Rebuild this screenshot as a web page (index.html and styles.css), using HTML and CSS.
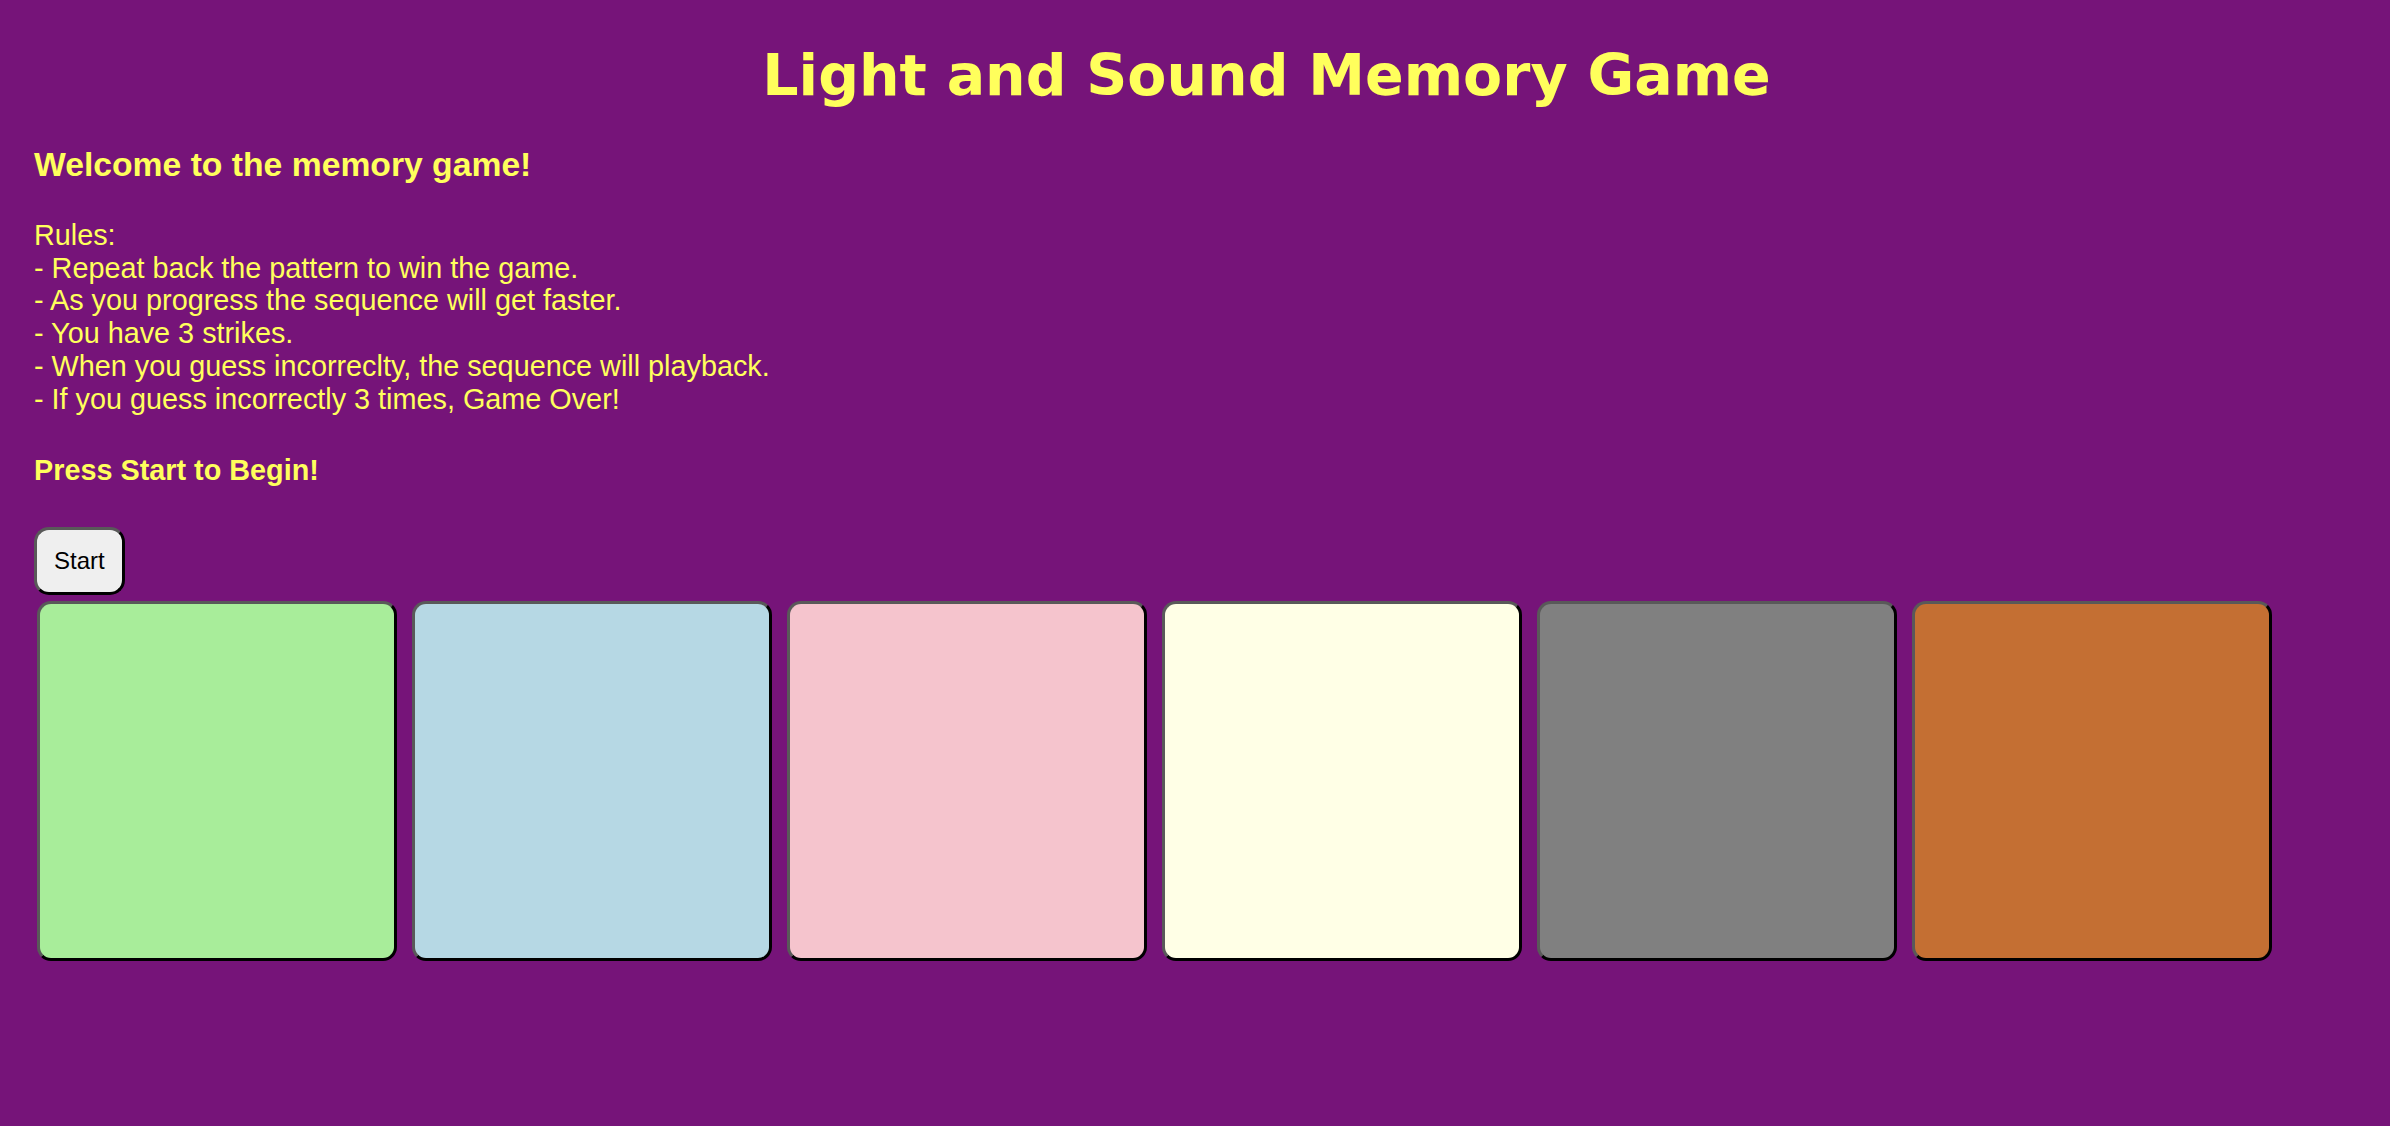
FILE: index.html
```html
<!DOCTYPE html>
<html lang="en">
<head>
<meta charset="utf-8">
<title>Light and Sound Memory Game</title>
<link rel="stylesheet" href="styles.css">
</head>
<body>
  <h1 class="title">Light and Sound Memory Game</h1>
  <h3 class="welcome">Welcome to the memory game!</h3>
  <p class="rules">Rules:<br>- Repeat back the pattern to win the game.<br>- As you progress the sequence will get faster.<br>- You have 3 strikes.<br>- When you guess incorreclty, the sequence will playback.<br>- If you guess incorrectly 3 times, Game Over!</p>
  <h4 class="prompt">Press Start to Begin!</h4>
  <div class="controls">
    <button class="start-btn">Start</button>
  </div>
  <div class="game-area">
    <button class="pad pad-green"></button>
    <button class="pad pad-blue"></button>
    <button class="pad pad-pink"></button>
    <button class="pad pad-yellow"></button>
    <button class="pad pad-gray"></button>
    <button class="pad pad-orange"></button>
  </div>
</body>
</html>
```
FILE: styles.css
```css
html, body {
  background: #761479;
}
body {
  margin: 0;
  padding: 0 0 0 34px;
  color: #ffff5c;
  font-family: "Liberation Sans", Arial, Helvetica, sans-serif;
  font-size: 28.8px;
}
.title {
  font-family: "DejaVu Sans", Verdana, sans-serif;
  font-weight: bold;
  font-size: 57px;
  line-height: 67px;
  margin: 42px 0 0;
  padding-left: 109px;
  text-align: center;
}
.welcome {
  font-size: 33.7px;
  font-weight: bold;
  line-height: 38.7px;
  margin: 36px 0 0;
}
.rules {
  font-size: 28.8px;
  line-height: 32.8px;
  margin: 35px 0 0;
}
.prompt {
  font-size: 28.8px;
  font-weight: bold;
  line-height: 32.8px;
  margin: 39px 0 0;
}
.controls {
  display: flex;
  margin-top: 40px;
}
.start-btn {
  font-family: "Liberation Sans", Arial, sans-serif;
  font-size: 24px;
  line-height: 28px;
  color: #000;
  background: #efefef;
  padding: 17px 17px;
  border: 3px solid;
  border-color: #595959 #000 #000 #595959;
  border-radius: 15px;
}
.game-area {
  display: flex;
  gap: 15px;
  margin: 6px 0 0 3px;
}
.pad {
  box-sizing: border-box;
  width: 360px;
  height: 360px;
  flex: none;
  padding: 0;
  border: 3px solid;
  border-color: #595959 #000 #000 #595959;
  border-radius: 14px;
}
.pad-green { background: #a8ed9a; }
.pad-blue { background: #b6d8e4; }
.pad-pink { background: #f5c4cd; }
.pad-yellow { background: #ffffe6; }
.pad-gray { background: #808080; }
.pad-orange { background: #c46f33; }
```
